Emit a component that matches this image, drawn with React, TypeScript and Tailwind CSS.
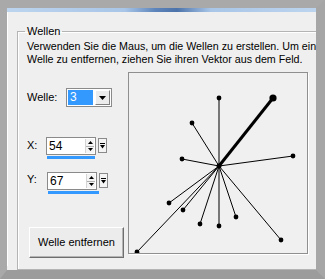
import React from "react";

const rays: [number, number][] = [
  [90, 25],
  [63, 50],
  [53, 86],
  [164, 83],
  [40, 130],
  [54, 137],
  [71, 151],
  [90, 153],
  [107, 144],
  [152, 167],
  [8, 179],
];

function WaveField() {
  const cx = 90;
  const cy = 93;
  return (
    <div className="h-[182px] w-[180px] border border-[#8f8f8f] bg-[#f0f0f0] shadow-[1px_1px_0_#ffffff]">
      <svg width="178" height="180" viewBox="0 0 178 180" className="block">
        {rays.map(([x, y], i) => (
          <g key={i}>
            <line x1={cx} y1={cy} x2={x} y2={y} stroke="#000" strokeWidth="1" />
            <circle cx={x} cy={y} r="2.4" fill="#000" />
          </g>
        ))}
        <line x1={cx} y1={cy} x2={144} y2={25} stroke="#000" strokeWidth="3" />
        <circle cx={144} cy={25} r="3.6" fill="#000" />
        <circle cx={cx} cy={cy} r="2.5" fill="#000" />
      </svg>
    </div>
  );
}

function SpinField({ value, barWidth }: { value: string; barWidth: string }) {
  return (
    <div className="flex flex-col">
      <div className="flex items-start gap-[2px]">
        <div className="flex h-[18px] w-[50px] items-stretch border border-[#8a8a8a] bg-white">
          <span className="flex-1 pl-[2px] text-[12px] leading-[16px] text-black">{value}</span>
          <div className="my-[1px] mr-[1px] flex w-[9px] flex-col border-l border-[#d4d4d4]">
            <div className="flex flex-1 items-center justify-center border-b border-[#b0b0b0] bg-[#f4f4f4]">
              <svg width="5" height="3" viewBox="0 0 5 3"><path d="M2.5 0 L5 3 L0 3 Z" fill="#000" /></svg>
            </div>
            <div className="flex flex-1 items-center justify-center bg-[#f4f4f4]">
              <svg width="5" height="3" viewBox="0 0 5 3"><path d="M0 0 L5 0 L2.5 3 Z" fill="#000" /></svg>
            </div>
          </div>
        </div>
        <div className="mt-[1px] flex h-[15px] w-[9px] items-center justify-center border border-[#8a8a8a] bg-[#f4f4f4]">
          <svg width="5" height="6" viewBox="0 0 5 6">
            <rect x="0" y="0" width="5" height="1" fill="#000" />
            <path d="M0 2 L5 2 L2.5 5.5 Z" fill="#000" />
          </svg>
        </div>
      </div>
      <div className={`mt-[1px] ml-[1px] h-[3px] bg-[#3399ff] ${barWidth}`} />
    </div>
  );
}

export default function App() {
  return (
    <div
      className="h-[279px] w-[325px] overflow-hidden border-t-[8px] border-r-[9px] border-b-[9px] border-l-[7px] border-t-[#a9a9a9] border-r-[#a6a6a6] border-b-[#9c9c9c] border-l-[#a9a9a9] bg-[#efefef] text-black"
      style={{ fontFamily: '"Liberation Sans", Arial, sans-serif' }}
    >
      <div className="h-[4px] bg-[linear-gradient(90deg,#bcd4ee_0%,#a9c6e8_38%,#5d85bb_48%,#4c74ab_55%,#a9c6e8_66%,#bcd4ee_100%)]" />
      <div className="h-[254px] border-l border-white pl-[9px] pt-[13px]">
        <fieldset className="h-[245px] w-[295px] border border-[#b4b4b4] shadow-[inset_1px_1px_0_#ffffff,1px_1px_0_#ffffff]">
          <legend className="ml-[7px] px-[2px] text-[11px] leading-[13px]">Wellen</legend>
          <div className="pl-[9px] pt-[2px] text-[10.7px] leading-[13px]">
            <p className="whitespace-nowrap">Verwenden Sie die Maus, um die Wellen zu erstellen. Um eine</p>
            <p className="whitespace-nowrap">Welle zu entfernen, ziehen Sie ihren Vektor aus dem Feld.</p>
            <div className="mt-[6px] flex">
              <div className="flex w-[101px] flex-col">
                <div className="mt-[16px] flex items-center">
                  <span className="w-[39px] text-[11px]">Welle:</span>
                  <div className="flex h-[19px] w-[46px] items-center gap-[2px] border border-[#8a8a8a] bg-white px-[1px]">
                    <span className="h-[15px] w-[25px] bg-[#3399ff] pl-[2px] text-[12px] leading-[15px] text-white">3</span>
                    <div className="flex h-[15px] w-[15px] items-center justify-center border border-t-white border-l-white border-r-[#808080] border-b-[#808080] bg-[#ececec]">
                      <svg width="7" height="4" viewBox="0 0 7 4"><path d="M0 0 L7 0 L3.5 4 Z" fill="#000" /></svg>
                    </div>
                  </div>
                </div>
                <div className="mt-[30px] flex items-start">
                  <span className="mt-[1px] w-[19px] text-[11px] leading-[14px]">X:</span>
                  <SpinField value="54" barWidth="w-[48px]" />
                </div>
                <div className="mt-[13px] flex items-start">
                  <span className="w-[20px] text-[11px] leading-[14px]">Y:</span>
                  <SpinField value="67" barWidth="w-[51px]" />
                </div>
                <button
                  type="button"
                  className="mt-[33px] ml-[2px] h-[31px] w-[95px] border border-t-white border-l-white border-r-[#6e6e6e] border-b-[#6e6e6e] bg-[#ececec] text-[11px] shadow-[inset_-1px_-1px_0_#b4b4b4]"
                >
                  Welle entfernen
                </button>
              </div>
              <WaveField />
            </div>
          </div>
        </fieldset>
      </div>
    </div>
  );
}
